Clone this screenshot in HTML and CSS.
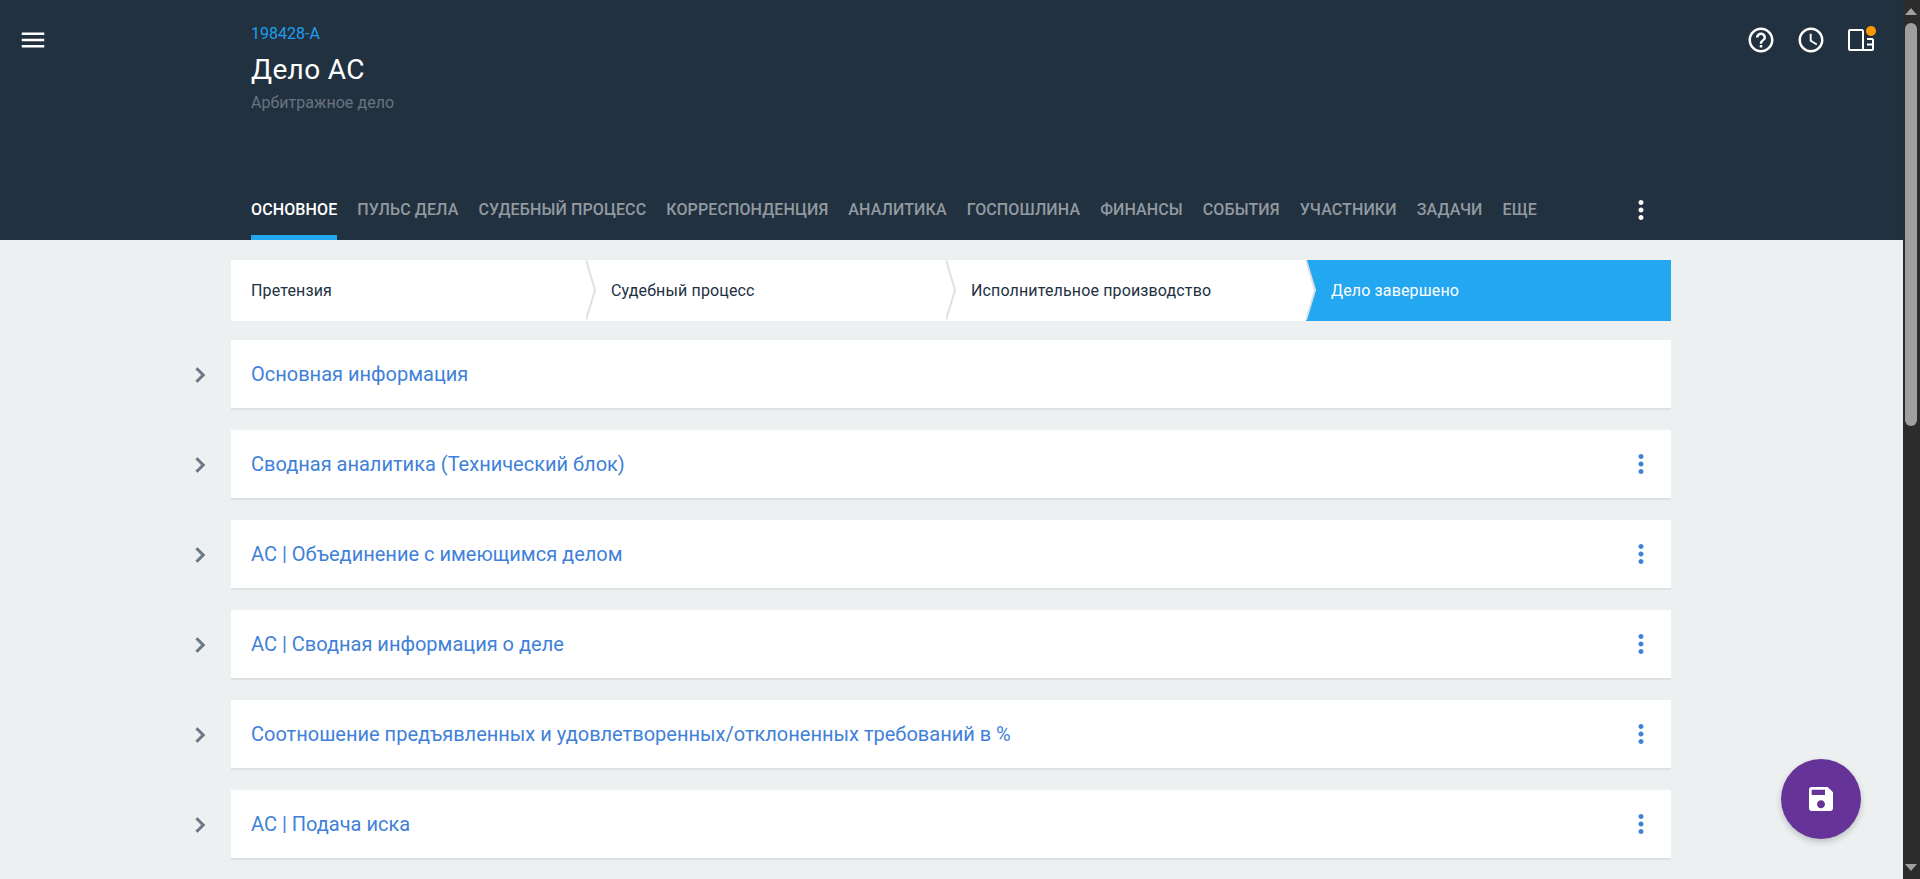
FILE: index.html
```html
<!DOCTYPE html>
<html lang="ru">
<head>
<meta charset="utf-8">
<title>Дело АС</title>
<link rel="stylesheet" href="styles.css">
</head>
<body>
<div class="viewport">
  <div class="page">
    <header class="header">
      <div class="header-top">
        <button class="menu-btn" aria-label="Меню">
          <svg class="icon30" viewBox="0 0 24 24"><path fill="#fff" d="M3 18h18v-2H3v2zm0-5h18v-2H3v2zm0-7v2h18V6H3z"/></svg>
        </button>
        <div class="case-info">
          <div class="case-num">198428-А</div>
          <div class="case-title">Дело АС</div>
          <div class="case-type">Арбитражное дело</div>
        </div>
        <div class="top-actions">
          <svg class="icon30" viewBox="0 0 24 24"><path fill="#fff" d="M11 18h2v-2h-2v2zm1-16C6.48 2 2 6.48 2 12s4.48 10 10 10 10-4.48 10-10S17.52 2 12 2zm0 18c-4.41 0-8-3.59-8-8s3.59-8 8-8 8 3.59 8 8-3.59 8-8 8zm0-14c-2.21 0-4 1.79-4 4h2c0-1.1.9-2 2-2s2 .9 2 2c0 2-3 1.75-3 5h2c0-2.25 3-2.5 3-5 0-2.21-1.79-4-4-4z"/></svg>
          <svg class="icon30" viewBox="0 0 24 24"><path fill="#fff" d="M11.99 2C6.47 2 2 6.48 2 12s4.47 10 9.99 10C17.52 22 22 17.52 22 12S17.52 2 11.99 2zM12 20c-4.42 0-8-3.58-8-8s3.58-8 8-8 8 3.58 8 8-3.58 8-8 8zm.5-13H11v6l5.25 3.15.75-1.23-4.5-2.67z"/></svg>
          <div class="book">
            <svg class="book-svg" viewBox="0 0 26 22"><path d="M15 1H2a1 1 0 0 0-1 1v18a1 1 0 0 0 1 1h22a1 1 0 0 0 1-1V10M15 1v20M19 10h6M19 15.5h6" fill="none" stroke="#fff" stroke-width="2"/></svg>
            <span class="badge"></span>
          </div>
        </div>
      </div>
      <nav class="tabs">
        <a class="tab active">Основное</a>
        <a class="tab">Пульс дела</a>
        <a class="tab">Судебный процесс</a>
        <a class="tab">Корреспонденция</a>
        <a class="tab">Аналитика</a>
        <a class="tab">Госпошлина</a>
        <a class="tab">Финансы</a>
        <a class="tab">События</a>
        <a class="tab">Участники</a>
        <a class="tab">Задачи</a>
        <a class="tab">Еще</a>
        <svg class="icon30 tabs-more" viewBox="0 0 24 24"><path fill="#fff" d="M12 8c1.1 0 2-.9 2-2s-.9-2-2-2-2 .9-2 2 .9 2 2 2zm0 2c-1.1 0-2 .9-2 2s.9 2 2 2 2-.9 2-2-.9-2-2-2zm0 6c-1.1 0-2 .9-2 2s.9 2 2 2 2-.9 2-2-.9-2-2-2z"/></svg>
      </nav>
    </header>
    <main class="content">
      <div class="steps">
        <div class="step">Претензия<svg class="step-arrow" viewBox="0 0 10 60"><path d="M0 0L9 30L0 60Z" fill="#fff"/><path d="M0 0L9 30L0 60" fill="none" stroke="#dde2e6" stroke-width="2"/></svg></div>
        <div class="step">Судебный процесс<svg class="step-arrow" viewBox="0 0 10 60"><path d="M0 0L9 30L0 60Z" fill="#fff"/><path d="M0 0L9 30L0 60" fill="none" stroke="#dde2e6" stroke-width="2"/></svg></div>
        <div class="step">Исполнительное производство<svg class="step-arrow" viewBox="0 0 10 60"><path d="M0 0L9 30L0 60Z" fill="#fff"/><path d="M0 0L9 30L0 60" fill="none" stroke="#dde2e6" stroke-width="2"/></svg></div>
        <div class="step current">Дело завершено</div>
      </div>

      <section class="row">
        <svg class="chev" viewBox="0 0 24 24"><path d="M10 6L8.59 7.41 13.17 12l-4.58 4.59L10 18l6-6z"/></svg>
        <div class="card"><span class="card-title">Основная информация</span></div>
      </section>
      <section class="row">
        <svg class="chev" viewBox="0 0 24 24"><path d="M10 6L8.59 7.41 13.17 12l-4.58 4.59L10 18l6-6z"/></svg>
        <div class="card"><span class="card-title">Сводная аналитика (Технический блок)</span>
          <svg class="icon30" viewBox="0 0 24 24"><path fill="#3f81d9" d="M12 8c1.1 0 2-.9 2-2s-.9-2-2-2-2 .9-2 2 .9 2 2 2zm0 2c-1.1 0-2 .9-2 2s.9 2 2 2 2-.9 2-2-.9-2-2-2zm0 6c-1.1 0-2 .9-2 2s.9 2 2 2 2-.9 2-2-.9-2-2-2z"/></svg></div>
      </section>
      <section class="row">
        <svg class="chev" viewBox="0 0 24 24"><path d="M10 6L8.59 7.41 13.17 12l-4.58 4.59L10 18l6-6z"/></svg>
        <div class="card"><span class="card-title">АС | Объединение с имеющимся делом</span>
          <svg class="icon30" viewBox="0 0 24 24"><path fill="#3f81d9" d="M12 8c1.1 0 2-.9 2-2s-.9-2-2-2-2 .9-2 2 .9 2 2 2zm0 2c-1.1 0-2 .9-2 2s.9 2 2 2 2-.9 2-2-.9-2-2-2zm0 6c-1.1 0-2 .9-2 2s.9 2 2 2 2-.9 2-2-.9-2-2-2z"/></svg></div>
      </section>
      <section class="row">
        <svg class="chev" viewBox="0 0 24 24"><path d="M10 6L8.59 7.41 13.17 12l-4.58 4.59L10 18l6-6z"/></svg>
        <div class="card"><span class="card-title">АС | Сводная информация о деле</span>
          <svg class="icon30" viewBox="0 0 24 24"><path fill="#3f81d9" d="M12 8c1.1 0 2-.9 2-2s-.9-2-2-2-2 .9-2 2 .9 2 2 2zm0 2c-1.1 0-2 .9-2 2s.9 2 2 2 2-.9 2-2-.9-2-2-2zm0 6c-1.1 0-2 .9-2 2s.9 2 2 2 2-.9 2-2-.9-2-2-2z"/></svg></div>
      </section>
      <section class="row">
        <svg class="chev" viewBox="0 0 24 24"><path d="M10 6L8.59 7.41 13.17 12l-4.58 4.59L10 18l6-6z"/></svg>
        <div class="card"><span class="card-title">Соотношение предъявленных и удовлетворенных/отклоненных требований в %</span>
          <svg class="icon30" viewBox="0 0 24 24"><path fill="#3f81d9" d="M12 8c1.1 0 2-.9 2-2s-.9-2-2-2-2 .9-2 2 .9 2 2 2zm0 2c-1.1 0-2 .9-2 2s.9 2 2 2 2-.9 2-2-.9-2-2-2zm0 6c-1.1 0-2 .9-2 2s.9 2 2 2 2-.9 2-2-.9-2-2-2z"/></svg></div>
      </section>
      <section class="row">
        <svg class="chev" viewBox="0 0 24 24"><path d="M10 6L8.59 7.41 13.17 12l-4.58 4.59L10 18l6-6z"/></svg>
        <div class="card"><span class="card-title">АС | Подача иска</span>
          <svg class="icon30" viewBox="0 0 24 24"><path fill="#3f81d9" d="M12 8c1.1 0 2-.9 2-2s-.9-2-2-2-2 .9-2 2 .9 2 2 2zm0 2c-1.1 0-2 .9-2 2s.9 2 2 2 2-.9 2-2-.9-2-2-2zm0 6c-1.1 0-2 .9-2 2s.9 2 2 2 2-.9 2-2-.9-2-2-2z"/></svg></div>
      </section>
    </main>
    <button class="fab" aria-label="Сохранить">
      <svg class="icon32" viewBox="0 0 24 24"><path fill="#fff" d="M17 3H5c-1.11 0-2 .9-2 2v14c0 1.1.89 2 2 2h14c1.1 0 2-.9 2-2V7l-4-4zm-5 16c-1.66 0-3-1.34-3-3s1.34-3 3-3 3 1.34 3 3-1.34 3-3 3zm3-10H5V5h10v4z"/></svg>
    </button>
  </div>
  <div class="scrollbar">
    <span class="arrow-up"></span>
    <span class="thumb"></span>
    <span class="arrow-down"></span>
  </div>
</div>
</body>
</html>
```
FILE: styles.css
```css
* { box-sizing: border-box; }
html, body { margin: 0; height: 100%; overflow: hidden; }
body { font-family: Roboto, "Noto Sans", sans-serif; background: #ecf0f1; color: #22313f; }
.viewport { display: flex; height: 879px; }
.page { flex: 1; position: relative; overflow: hidden; min-width: 0; }

.icon30 { width: 30px; height: 30px; display: block; flex: none; }
.icon32 { width: 32px; height: 32px; display: block; }

.header { height: 240px; background: #22313f; display: flex; flex-direction: column; }
.header-top { flex: 1; display: flex; align-items: flex-start; }
.menu-btn { margin: 25px 0 0 18px; padding: 0; width: 30px; height: 30px; border: 0; background: none; }
.case-info { margin-left: 203px; padding-top: 24px; }
.case-num { font-size: 16px; line-height: 20px; color: #1f9df0; }
.case-title { font-size: 28px; line-height: 36px; color: #fff; margin-top: 8px; letter-spacing: .35px; }
.case-type { font-size: 16px; line-height: 20px; color: #69747f; margin-top: 5px; letter-spacing: .05px; }
.top-actions { margin-left: auto; margin-right: 27px; padding-top: 25px; display: flex; align-items: flex-start; gap: 20px; }
.book { position: relative; width: 30px; height: 30px; }
.book-svg { position: absolute; left: 2px; top: 4px; width: 26px; height: 22px; }
.badge { position: absolute; left: 20px; top: 1px; width: 10px; height: 10px; border-radius: 50%; background: #ff9800; }

.tabs { height: 55px; padding-left: 251px; display: flex; gap: 20px; position: relative; }
.tab { font-size: 16px; font-weight: 500; text-transform: uppercase; color: #929aa1; line-height: 26px; padding-top: 12px; height: 55px; white-space: nowrap; letter-spacing: .12px; }
.tab.active { color: #fff; border-bottom: 5px solid #23a7f1; }
.tabs-more { position: absolute; left: 1626px; top: 10px; }

.content { padding: 20px 0 0 231px; width: 1671px; }
.steps { display: grid; grid-template-columns: repeat(4, 360px); height: 60px; margin-bottom: 20px; }
.step { position: relative; background: #fff; padding: 1px 0 0 20px; font-size: 16px; line-height: 60px; color: #22313f; white-space: nowrap; letter-spacing: .14px; }
.step.current { background: #23a7f1; color: #fff; margin-left: -5px; padding-left: 25px; }
.step-arrow { position: absolute; right: -5px; top: 0; width: 10px; height: 60px; z-index: 1; }

.row { position: relative; margin-bottom: 20px; }
.chev { position: absolute; left: -46px; top: 20px; width: 30px; height: 30px; }
.chev path { fill: #6b7785; stroke: #6b7785; stroke-width: .5; }
.card { height: 70px; background: #fff; border-bottom: 2px solid #dde1e4; padding: 0 15px 0 20px; display: flex; align-items: center; justify-content: space-between; }
.card-title { font-size: 20px; color: #3f81d9; }

.fab { position: absolute; left: 1781px; top: 759px; width: 80px; height: 80px; padding: 0; border: 0; border-radius: 50%; background: #663399; box-shadow: 0 3px 6px rgba(0,0,0,.2); display: flex; align-items: center; justify-content: center; }

.scrollbar { width: 17px; flex: none; background: #2c2c2c; position: relative; }
.thumb { position: absolute; left: 2px; top: 23px; width: 12px; height: 403px; background: #9f9f9f; border-radius: 6px; }
.arrow-up { position: absolute; left: 2px; top: 8px; width: 0; height: 0; border: 6px solid transparent; border-top: 0; border-bottom: 7px solid #9f9f9f; }
.arrow-down { position: absolute; left: 2px; bottom: 8px; width: 0; height: 0; border: 6px solid transparent; border-bottom: 0; border-top: 7px solid #9f9f9f; }
```
